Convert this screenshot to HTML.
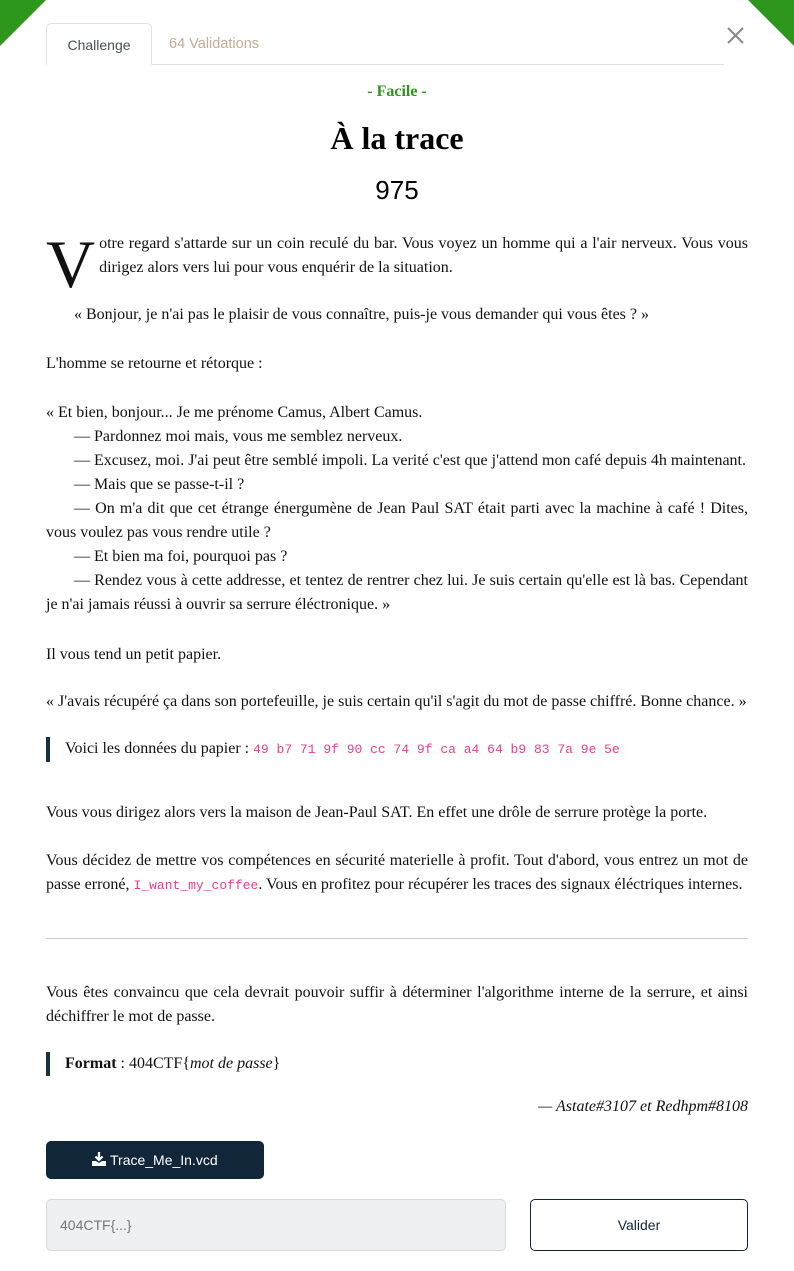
<!DOCTYPE html>
<html><head><meta charset="utf-8"><style>
*{margin:0;padding:0;box-sizing:border-box}
body{width:794px;height:1271px;background:#fff;position:relative;overflow:hidden;font-family:"Liberation Serif",serif;font-size:16px;color:#111}
.a{position:absolute;left:46px;width:702px;line-height:24px;text-align:justify;margin-top:2px}
.i{text-indent:28px}
code{font-family:"Liberation Mono",monospace;font-size:13px;color:#e83e8c}
.ui{font-family:"Liberation Sans",sans-serif}
.bq{border-left:4px solid #163048;padding-left:15px}
</style></head><body>
<svg style="position:absolute;left:0;top:0" width="794" height="50"><polygon points="0,0 46,0 0,46" fill="#2e961c"/><polygon points="748,0 794,0 794,46" fill="#2e961c"/><path d="M728 28 L743 43 M743 28 L728 43" stroke="#888" stroke-width="2"/></svg>
<div style="position:absolute;left:46px;top:64px;width:678px;border-top:1px solid #dee2e6"></div>
<div class="ui" style="position:absolute;left:46px;top:23px;width:106px;height:42px;border:1px solid #dee2e6;border-bottom:1px solid #fff;border-radius:5px 5px 0 0;background:#fff;font-size:14px;color:#495057;text-align:center;line-height:42px">Challenge</div>
<div class="ui" style="position:absolute;left:169px;top:23px;line-height:42px;font-size:14.5px;color:#c3ab94">64 Validations</div>
<div style="position:absolute;left:0;width:794px;top:82px;text-align:center;color:#2e961c;font-size:16px;line-height:20px"><b>- Facile -</b></div>
<div style="position:absolute;left:0;width:794px;top:118px;text-align:center;font-size:32px;font-weight:bold;line-height:40px;color:#000">À la trace</div>
<div style="position:absolute;left:0;width:794px;top:174px;text-align:center;font-size:26px;font-family:'Liberation Sans',sans-serif;line-height:32px;color:#000">975</div>
<div class="a" style="top:230px"><span style="float:left;font-size:68px;line-height:52px;margin:6px 4px 0 0">V</span>otre regard s'attarde sur un coin reculé du bar. Vous voyez un homme qui a l'air nerveux. Vous vous dirigez alors vers lui pour vous enquérir de la situation.</div>
<div class="a i" style="top:301px">« Bonjour, je n'ai pas le plaisir de vous connaître, puis-je vous demander qui vous êtes ? »</div>
<div class="a" style="top:350px">L'homme se retourne et rétorque :</div>
<div class="a" style="top:399px">« Et bien, bonjour... Je me prénome Camus, Albert Camus.<br>
<span style="padding-left:28px">— Pardonnez moi mais, vous me semblez nerveux.</span></div>
<div class="a i" style="top:447px">— Excusez, moi. J'ai peut être semblé impoli. La verité c'est que j'attend mon café depuis 4h maintenant.</div>
<div class="a i" style="top:471px">— Mais que se passe-t-il ?</div>
<div class="a i" style="top:495px">— On m'a dit que cet étrange énergumène de Jean Paul SAT était parti avec la machine à café ! Dites, vous voulez pas vous rendre utile ?</div>
<div class="a i" style="top:543px">— Et bien ma foi, pourquoi pas ?</div>
<div class="a i" style="top:567px">— Rendez vous à cette addresse, et tentez de rentrer chez lui. Je suis certain qu'elle est là bas. Cependant je n'ai jamais réussi à ouvrir sa serrure éléctronique. »</div>
<div class="a" style="top:641px">Il vous tend un petit papier.</div>
<div class="a" style="top:688px">« J'avais récupéré ça dans son portefeuille, je suis certain qu'il s'agit du mot de passe chiffré. Bonne chance. »</div>
<div class="a bq" style="top:735px">Voici les données du papier : <code>49 b7 71 9f 90 cc 74 9f ca a4 64 b9 83 7a 9e 5e</code></div>
<div class="a" style="top:799px">Vous vous dirigez alors vers la maison de Jean-Paul SAT. En effet une drôle de serrure protège la porte.</div>
<div class="a" style="top:847px">Vous décidez de mettre vos compétences en sécurité materielle à profit. Tout d'abord, vous entrez un mot de passe erroné, <code>I_want_my_coffee</code>. Vous en profitez pour récupérer les traces des signaux éléctriques internes.</div>
<div style="position:absolute;left:46px;top:938px;width:702px;border-top:1px solid #ccc"></div>
<div class="a" style="top:979px">Vous êtes convaincu que cela devrait pouvoir suffir à déterminer l'algorithme interne de la serrure, et ainsi déchiffrer le mot de passe.</div>
<div class="a bq" style="top:1050px"><b>Format</b> : 404CTF{<i>mot de passe</i>}</div>
<div class="a" style="top:1093px;text-align:right;font-style:italic">— Astate#3107 et Redhpm#8108</div>
<div class="ui" style="position:absolute;left:46px;top:1141px;width:218px;height:38px;background:#12263a;border-radius:5px;color:#fff;font-size:14px;text-align:center;line-height:38px"><svg width="14" height="14" style="vertical-align:-1px" viewBox="0 0 14 14"><path d="M7 0v8M3.5 4.5L7 8l3.5-3.5" stroke="#fff" stroke-width="2.2" fill="none"/><path d="M0 9h4l3 2 3-2h4v5H0z" fill="#fff"/></svg> Trace_Me_In.vcd</div>
<div class="ui" style="position:absolute;left:46px;top:1199px;width:460px;height:52px;background:#eff0f1;border:1px solid #d6d8da;border-radius:5px;color:#777;font-size:14px;line-height:50px;padding-left:13px">404CTF{...}</div>
<div class="ui" style="position:absolute;left:530px;top:1199px;width:218px;height:52px;border:1px solid #12263a;border-radius:5px;color:#12263a;font-size:14px;text-align:center;line-height:50px">Valider</div>
</body></html>
